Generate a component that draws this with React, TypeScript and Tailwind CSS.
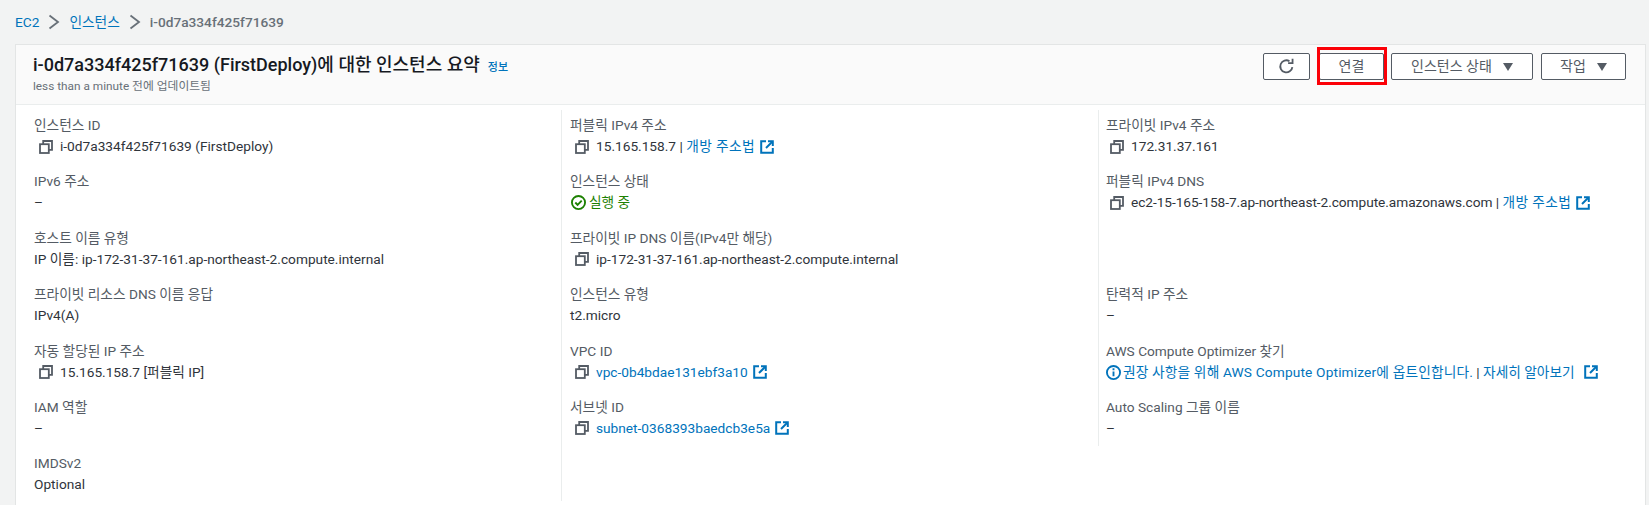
import React from "react";

const font = { fontFamily: '"Roboto","Noto Sans CJK KR",sans-serif' };

function Copy() {
  return (
    <svg width="14" height="14" viewBox="0 0 14 14" fill="none" stroke="#545b64" strokeWidth="1.8" className="shrink-0">
      <rect x="1" y="4.2" width="8.8" height="8.8" />
      <path d="M4.2 4.2V1h8.8v8.8H9.8" />
    </svg>
  );
}
function Ext() {
  return (
    <svg width="14" height="14" viewBox="0 0 14 14" fill="none" stroke="#0073bb" strokeWidth="2" className="shrink-0">
      <path d="M6 1.2H1.2v11.6h11.6V8" />
      <path d="M8 1.2h4.8V6" />
      <path d="M12.5 1.5L6 8" />
    </svg>
  );
}
function Label({ children }: { children: React.ReactNode }) {
  return <div className="h-[21px] leading-[21px] text-[#545b64]">{children}</div>;
}
function Link({ children, className = "" }: { children: React.ReactNode; className?: string }) {
  return <span className={`text-[#0073bb] ${className}`}>{children}</span>;
}
function Field({ label, children, copy, ml = "ml-[5px]" }: { label: string; children: React.ReactNode; copy?: boolean; ml?: string }) {
  return (
    <div className="h-[56.4px] pt-[5px]">
      <Label>{label}</Label>
      <div className="flex h-[21px] items-center leading-[21px] text-[#2f343b]">
        {copy && (
          <span className={`${ml} mr-[7px] flex`}>
            <Copy />
          </span>
        )}
        {children}
      </div>
    </div>
  );
}
function Chevron() {
  return (
    <svg width="14" height="16" viewBox="0 0 14 16" fill="none" stroke="#687078" strokeWidth="1.8">
      <path d="M2.5 1.5L11 8l-8.5 6.5" />
    </svg>
  );
}
function Caret() {
  return (
    <svg width="10" height="8" viewBox="0 0 10 8" fill="#545b64">
      <path d="M0 0h10L5 8z" />
    </svg>
  );
}
const btn =
  "flex h-[27px] items-center justify-center rounded-[2px] border border-[#545b64] bg-white text-[14px] text-[#545b64]";

export default function App() {
  return (
    <div className="h-[505px] w-[1649px] overflow-hidden bg-[#f2f3f3] text-[13.7px]" style={font}>
      <nav className="flex h-[44px] items-center gap-[8px] pl-[15px] text-[13.7px]">
        <Link>EC2</Link>
        <Chevron />
        <Link>인스턴스</Link>
        <Chevron />
        <span className="font-medium text-[#687078]">i-0d7a334f425f71639</span>
      </nav>
      <section className="ml-[15px] mr-[3px] h-[461px] border-l border-r border-t border-[#e3e5e5] bg-white">
        <header className="flex h-[60px] justify-between border-b border-[#eaeded] bg-[#fafafa] pl-[17px] pr-[19px]">
          <div className="pt-[8px]">
            <div className="flex items-baseline gap-[8px]">
              <h1 className="text-[18px] leading-[24px] font-medium text-[#16191f]">
                i-0d7a334f425f71639 (FirstDeploy)에 대한 인스턴스 요약
              </h1>
              <span className="text-[11px] font-medium text-[#0073bb]">정보</span>
            </div>
            <p className="pt-[1px] text-[11.8px] leading-[16px] text-[#687078]">less than a minute 전에 업데이트됨</p>
          </div>
          <div className="flex items-start pt-[8px]">
            <button className={`${btn} w-[47px]`}>
              <svg width="17" height="17" viewBox="0 0 16 16" fill="none" stroke="#545b64" strokeWidth="1.7">
                <path d="M13.5 8.5A5.7 5.7 0 1 1 10.8 3" />
                <path d="M9.5 4.8h4.2V.8" />
              </svg>
            </button>
            <div className="relative ml-[9px]">
              <button className={`${btn} w-[65px]`}>연결</button>
              <div className="absolute left-[-2px] top-[-6px] h-[38px] w-[70px] border-[3px] border-[#fb0007]" />
            </div>
            <button className={`${btn} ml-[7px] w-[142px] gap-[11px]`}>
              인스턴스 상태 <Caret />
            </button>
            <button className={`${btn} ml-[8px] w-[85px] gap-[11px]`}>
              작업 <Caret />
            </button>
          </div>
        </header>
        <div className="grid grid-cols-[545px_537px_1fr] pt-[5px]">
          <div className="h-[391px] pl-[18px]">
            <Field label="인스턴스 ID" copy>
              i-0d7a334f425f71639 (FirstDeploy)
            </Field>
            <Field label="IPv6 주소">–</Field>
            <Field label="호스트 이름 유형">IP 이름: ip-172-31-37-161.ap-northeast-2.compute.internal</Field>
            <Field label="프라이빗 리소스 DNS 이름 응답">IPv4(A)</Field>
            <Field label="자동 할당된 IP 주소" copy>
              15.165.158.7 [퍼블릭 IP]
            </Field>
            <Field label="IAM 역할">–</Field>
            <Field label="IMDSv2">Optional</Field>
          </div>
          <div className="h-[391px] border-l border-[#eaeded] pl-[8px]">
            <Field label="퍼블릭 IPv4 주소" copy>
              15.165.158.7&nbsp;|&nbsp;<Link className="tracking-[0.4px]">개방 주소법</Link>
              <span className="ml-[5px] flex">
                <Ext />
              </span>
            </Field>
            <Field label="인스턴스 상태">
              <svg width="15" height="15" viewBox="0 0 16 16" fill="none" stroke="#1d8102" strokeWidth="2" className="ml-[1px] mr-[3px] shrink-0">
                <circle cx="8" cy="8" r="7" />
                <path d="M4.6 8l2.4 2.5 4.4-4.6" />
              </svg>
              <span className="text-[#1d8102]">실행 중</span>
            </Field>
            <Field label="프라이빗 IP DNS 이름(IPv4만 해당)" copy>
              ip-172-31-37-161.ap-northeast-2.compute.internal
            </Field>
            <Field label="인스턴스 유형">t2.micro</Field>
            <Field label="VPC ID" copy>
              <Link>vpc-0b4bdae131ebf3a10</Link>
              <span className="ml-[5px] flex">
                <Ext />
              </span>
            </Field>
            <Field label="서브넷 ID" copy>
              <Link>subnet-0368393baedcb3e5a</Link>
              <span className="ml-[5px] flex">
                <Ext />
              </span>
            </Field>
          </div>
          <div className="h-[336px] border-l border-[#eaeded] pl-[7px]">
            <Field label="프라이빗 IPv4 주소" copy ml="ml-[4px]">
              172.31.37.161
            </Field>
            <Field label="퍼블릭 IPv4 DNS" copy ml="ml-[4px]">
              <span className="tracking-[-0.06px]">ec2-15-165-158-7.ap-northeast-2.compute.amazonaws.com</span>&nbsp;|&nbsp;
              <Link className="tracking-[0.4px]">개방 주소법</Link>
              <span className="ml-[5px] flex">
                <Ext />
              </span>
            </Field>
            <div className="h-[56.4px]" />
            <Field label="탄력적 IP 주소">–</Field>
            <Field label="AWS Compute Optimizer 찾기">
              <svg width="15" height="15" viewBox="0 0 16 16" fill="none" stroke="#0073bb" strokeWidth="2" className="mr-[2px] shrink-0">
                <circle cx="8" cy="8" r="7" />
                <path d="M8 7v5M8 3.5v2" />
              </svg>
              <Link className="tracking-[0.16px]">권장 사항을 위해 AWS Compute Optimizer에 옵트인합니다.</Link>&nbsp;|&nbsp;<Link>자세히 알아보기</Link>
              <span className="ml-[9px] flex">
                <Ext />
              </span>
            </Field>
            <Field label="Auto Scaling 그룹 이름">–</Field>
          </div>
        </div>
      </section>
    </div>
  );
}
